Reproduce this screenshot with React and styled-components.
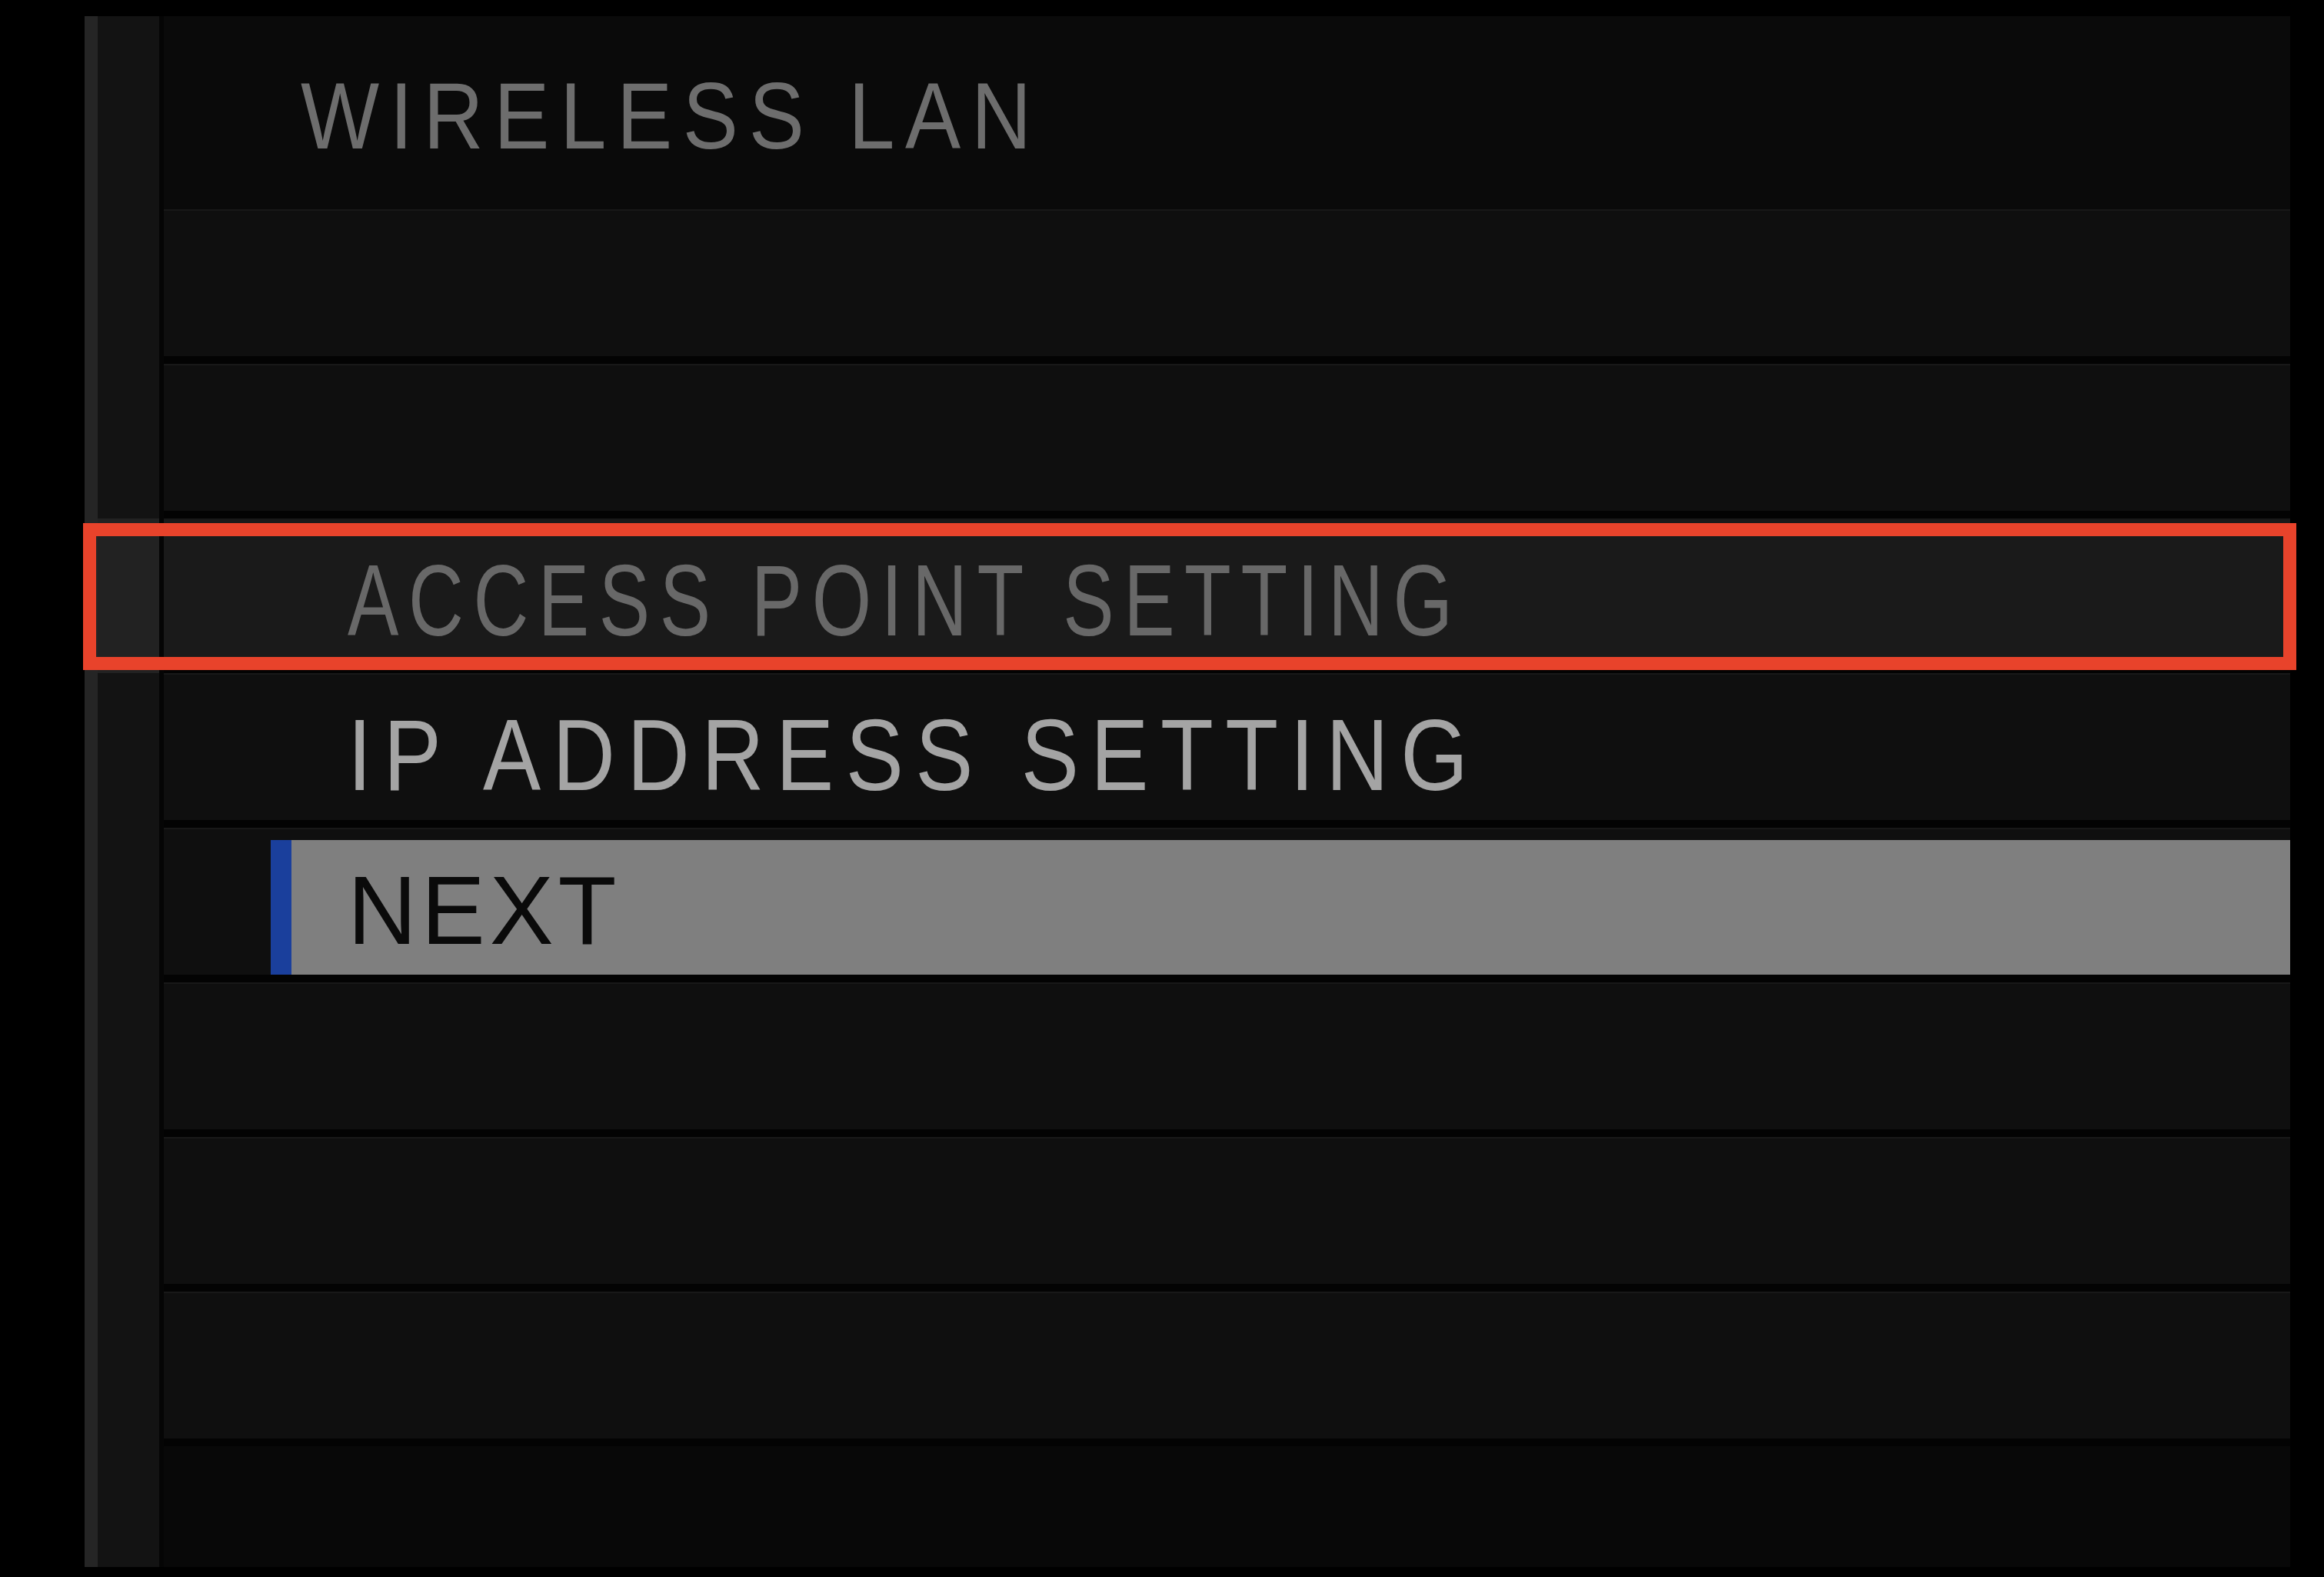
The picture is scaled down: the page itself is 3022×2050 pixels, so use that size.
import React from 'react';
import styled, { createGlobalStyle } from 'styled-components';

const GlobalStyle = createGlobalStyle`
  html, body {
    margin: 0;
    padding: 0;
    background: #000;
  }
  body {
    width: 3022px;
    height: 2050px;
    overflow: hidden;
    font-family: "Liberation Sans", Arial, sans-serif;
  }
`;

const Screen = styled.div`
  width: 3022px;
  height: 2050px;
  box-sizing: border-box;
  padding: 21px 44px 13px 110px;
  background: #000;
`;

const Panel = styled.div`
  display: flex;
  flex-direction: column;
  height: 100%;
`;

const Line = styled.div`
  position: relative;
  display: grid;
  grid-template-columns: 103px 1fr;
  height: ${(p) => p.$height}px;
  flex: none;
`;

const Rail = styled.div`
  box-sizing: border-box;
  border-left: 17px solid #252525;
  border-right: 6px solid #050505;
  background: ${(p) => (p.$selected ? '#222222' : '#131313')};
`;

const Header = styled.div`
  background: #0a0a0a;
  padding: 68px 0 0 178px;
`;

const Footer = styled.div`
  background: #080808;
`;

const Cell = styled.div`
  box-sizing: border-box;
  border-top: 2px solid #181818;
  border-bottom: 10px solid #030303;
  background: ${(p) => (p.$selected ? '#1a1a1a' : '#0f0f0f')};
  padding: ${(p) => (p.$bar ? '14px 0 0 139px' : '39px 0 0 239px')};
`;

const Label = styled.div`
  font-size: ${(p) => p.$size}px;
  line-height: 1;
  letter-spacing: ${(p) => p.$spacing}px;
  color: ${(p) => p.$color};
  white-space: nowrap;
  transform: scaleX(${(p) => p.$scale || 1});
  transform-origin: left center;
`;

const Bar = styled.div`
  box-sizing: border-box;
  height: 175px;
  border-left: 27px solid #1a3f9c;
  background: #7f7f7f;
  padding: 28px 0 0 73px;
`;

const Marker = styled.div`
  position: absolute;
  top: 6px;
  bottom: 4px;
  left: -2px;
  right: -8px;
  border: 17px solid #e8432b;
  pointer-events: none;
`;

const rows = [
  { key: 'r1' },
  { key: 'r2' },
  { key: 'ap', text: 'ACCESS POINT SETTING', color: '#686868', spacing: 16.5, scale: 0.76, selected: true },
  { key: 'ip', text: 'IP ADDRESS SETTING', color: '#a4a4a4', spacing: 18, scale: 0.86 },
  { key: 'next', text: 'NEXT', color: '#0a0a0a', spacing: 6, scale: 0.98, bar: true },
  { key: 'r6' },
  { key: 'r7' },
  { key: 'r8' },
];

const MenuRow = ({ text, color, spacing, scale, selected, bar }) => (
  <Line $height={201}>
    <Rail $selected={selected} />
    <Cell $selected={selected} $bar={bar}>
      {bar ? (
        <Bar>
          <Label $size={127} $spacing={spacing} $scale={scale} $color={color}>{text}</Label>
        </Bar>
      ) : (
        text && (
          <Label $size={131} $spacing={spacing} $scale={scale} $color={color}>{text}</Label>
        )
      )}
    </Cell>
    {selected && <Marker />}
  </Line>
);

export default function App() {
  return (
    <Screen>
      <GlobalStyle />
      <Panel>
        <Line $height={251}>
          <Rail />
          <Header>
            <Label $size={123} $spacing={15.5} $scale={0.88} $color="#6d6d6d">WIRELESS LAN</Label>
          </Header>
        </Line>
        {rows.map(({ key, ...row }) => (
          <MenuRow key={key} {...row} />
        ))}
        <Line $height={157}>
          <Rail />
          <Footer />
        </Line>
      </Panel>
    </Screen>
  );
}
